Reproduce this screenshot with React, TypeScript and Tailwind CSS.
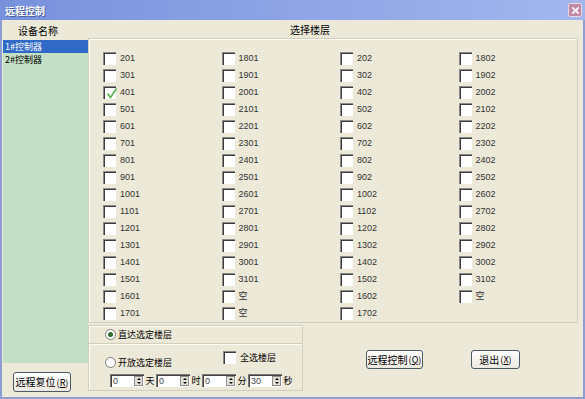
import React from "react";

const col1 = Array.from({ length: 16 }, (_, i) => String(201 + i * 100));
const col2 = [...Array.from({ length: 14 }, (_, i) => String(1801 + i * 100)), "空", "空"];
const col3 = Array.from({ length: 16 }, (_, i) => String(202 + i * 100));
const col4 = [...Array.from({ length: 14 }, (_, i) => String(1802 + i * 100)), "空"];

const Check = ({ checked }: { checked?: boolean }) => (
  <span className="relative block w-[13px] h-[13px] shrink-0 bg-white border-t border-l border-[#8a8a8a] shadow-[inset_1px_1px_0_#3c3c3c]">
    {checked && (
      <svg viewBox="0 0 13 13" className="absolute left-[1px] top-0 w-[13px] h-[13px]">
        <path d="M2.5 6.5 L5.5 10.5 L11.5 1.5" fill="none" stroke="#5cb35c" strokeWidth="1.8" />
      </svg>
    )}
  </span>
);

const Radio = ({ on }: { on?: boolean }) => (
  <span className="flex items-center justify-center w-[11px] h-[11px] shrink-0 rounded-full bg-white border border-[#7b7b7b]">
    {on && <span className="w-[5px] h-[5px] rounded-full bg-[#2f6e2f]" />}
  </span>
);

const Spin = ({ value }: { value: string }) => (
  <div className="flex w-[34px] h-[13px] bg-white border-t border-l border-[#7a7a7a] shadow-[inset_1px_1px_0_#404040]">
    <span className="flex-1 pl-[2px] text-[9px] leading-[12px] font-['Liberation_Sans'] text-[#444]">{value}</span>
    <span className="flex flex-col w-[9px] my-[1px] mr-[1px] bg-[#e4e2d8] border border-[#8d8d8d]">
      <span className="flex-1 flex items-center justify-center">
        <span className="w-0 h-0 border-l-[2px] border-r-[2px] border-b-[2px] border-l-transparent border-r-transparent border-b-black" />
      </span>
      <span className="flex-1 flex items-center justify-center">
        <span className="w-0 h-0 border-l-[2px] border-r-[2px] border-t-[2px] border-l-transparent border-r-transparent border-t-black" />
      </span>
    </span>
  </div>
);

const Button = ({ label, hot, className }: { label: string; hot: string; className?: string }) => (
  <div
    className={`flex items-center justify-center rounded-[3px] border border-[#4d5866] bg-gradient-to-b from-white to-[#ece9e0] text-[10px] leading-none text-black ${className ?? ""}`}
  >
    {label}
    <span className="ml-[1px] text-[9px]">
      (<span className="underline">{hot}</span>)
    </span>
  </div>
);

const Column = ({ items, checked }: { items: string[]; checked?: string }) => (
  <div className="flex flex-col w-[120px]">
    {items.map((n, i) => (
      <div key={i} className="flex items-center h-[17px]">
        <Check checked={n === checked} />
        <span className="ml-[4px] text-[9px] leading-none font-['Liberation_Sans','Noto_Sans_CJK_SC',sans-serif] text-[#333]">
          {n}
        </span>
      </div>
    ))}
  </div>
);

export default function App() {
  return (
    <div className="w-[585px] h-[399px] flex flex-col overflow-hidden bg-[#ece9d8] font-['Noto_Sans_CJK_SC',sans-serif] text-black">
      {/* title bar */}
      <div className="flex items-center justify-between h-[20px] pl-[5px] pr-[3px] bg-gradient-to-r from-[#7891dc] to-[#a3b7ee]">
        <span className="text-[10px] font-bold text-white [text-shadow:1px_1px_0_#4a5f9e]">远程控制</span>
        <span className="flex items-center justify-center w-[14px] h-[14px] rounded-[2px] bg-[#c38aa6] border border-[#e8d6e4]">
          <svg viewBox="0 0 10 10" className="w-[9px] h-[9px]">
            <path d="M1.5 1.5 L8.5 8.5 M8.5 1.5 L1.5 8.5" stroke="white" strokeWidth="1.8" />
          </svg>
        </span>
      </div>

      <div className="flex-1 flex border-l-2 border-r-2 border-b-2 border-[#8c9ed4]">
        {/* device list */}
        <div className="flex flex-col w-[86px]">
          <div className="flex items-center h-[20px] pl-[16px] text-[10px]">设备名称</div>
          <div className="ml-[1px] w-[85px] h-[323px] bg-[#c3dfc5] text-[9px]">
            <div className="flex items-center h-[13px] leading-[13px] bg-[#3169c6] text-white pl-[2px]">1#控制器</div>
            <div className="flex items-center h-[13px] leading-[13px] pl-[2px]">2#控制器</div>
          </div>
          <Button label="远程复位" hot="R" className="mt-[9px] ml-[11px] w-[58px] h-[20px]" />
        </div>

        {/* floors */}
        <div className="flex flex-col flex-1">
          <div className="flex items-center h-[18px] pl-[202px] text-[10px]">选择楼层</div>
          <div className="flex w-[490px] h-[285px] pt-[11px] pl-[14px] border border-[#d3cfbf] shadow-[inset_1px_1px_0_#fbfaf4]">
            <Column items={col1} checked="401" />
            <Column items={col2} />
            <Column items={col3} />
            <Column items={col4} />
          </div>

          <div className="flex flex-1">
            <div className="flex flex-col w-[215px] h-[66px] mt-[2px] border border-[#d3cfbf] shadow-[inset_1px_1px_0_#fbfaf4]">
              <div className="flex items-center h-[17px] pl-[16px] text-[9px]">
                <Radio on />
                <span className="ml-[2px]">直达选定楼层</span>
              </div>
              <div className="h-px bg-[#d3cfbf] shadow-[0_1px_0_#fbfaf4]" />
              <div className="flex items-start h-[26px] pl-[16px] text-[9px]">
                <div className="flex items-center w-[118px] mt-[12px]">
                  <Radio />
                  <span className="ml-[2px]">开放选定楼层</span>
                </div>
                <div className="flex items-center mt-[7px]">
                  <Check />
                  <span className="ml-[4px]">全选楼层</span>
                </div>
              </div>
              <div className="flex items-center mt-[4px] pl-[21px] text-[9px]">
                <Spin value="0" />
                <span className="w-[12px] text-center">天</span>
                <Spin value="0" />
                <span className="w-[12px] text-center">时</span>
                <Spin value="0" />
                <span className="w-[12px] text-center">分</span>
                <Spin value="30" />
                <span className="w-[12px] text-center">秒</span>
              </div>
            </div>
            <div className="flex items-start pt-[27px] pl-[63px] gap-[48px]">
              <Button label="远程控制" hot="Q" className="w-[57px] h-[19px]" />
              <Button label="退出" hot="X" className="w-[49px] h-[19px]" />
            </div>
          </div>
        </div>
      </div>
    </div>
  );
}
